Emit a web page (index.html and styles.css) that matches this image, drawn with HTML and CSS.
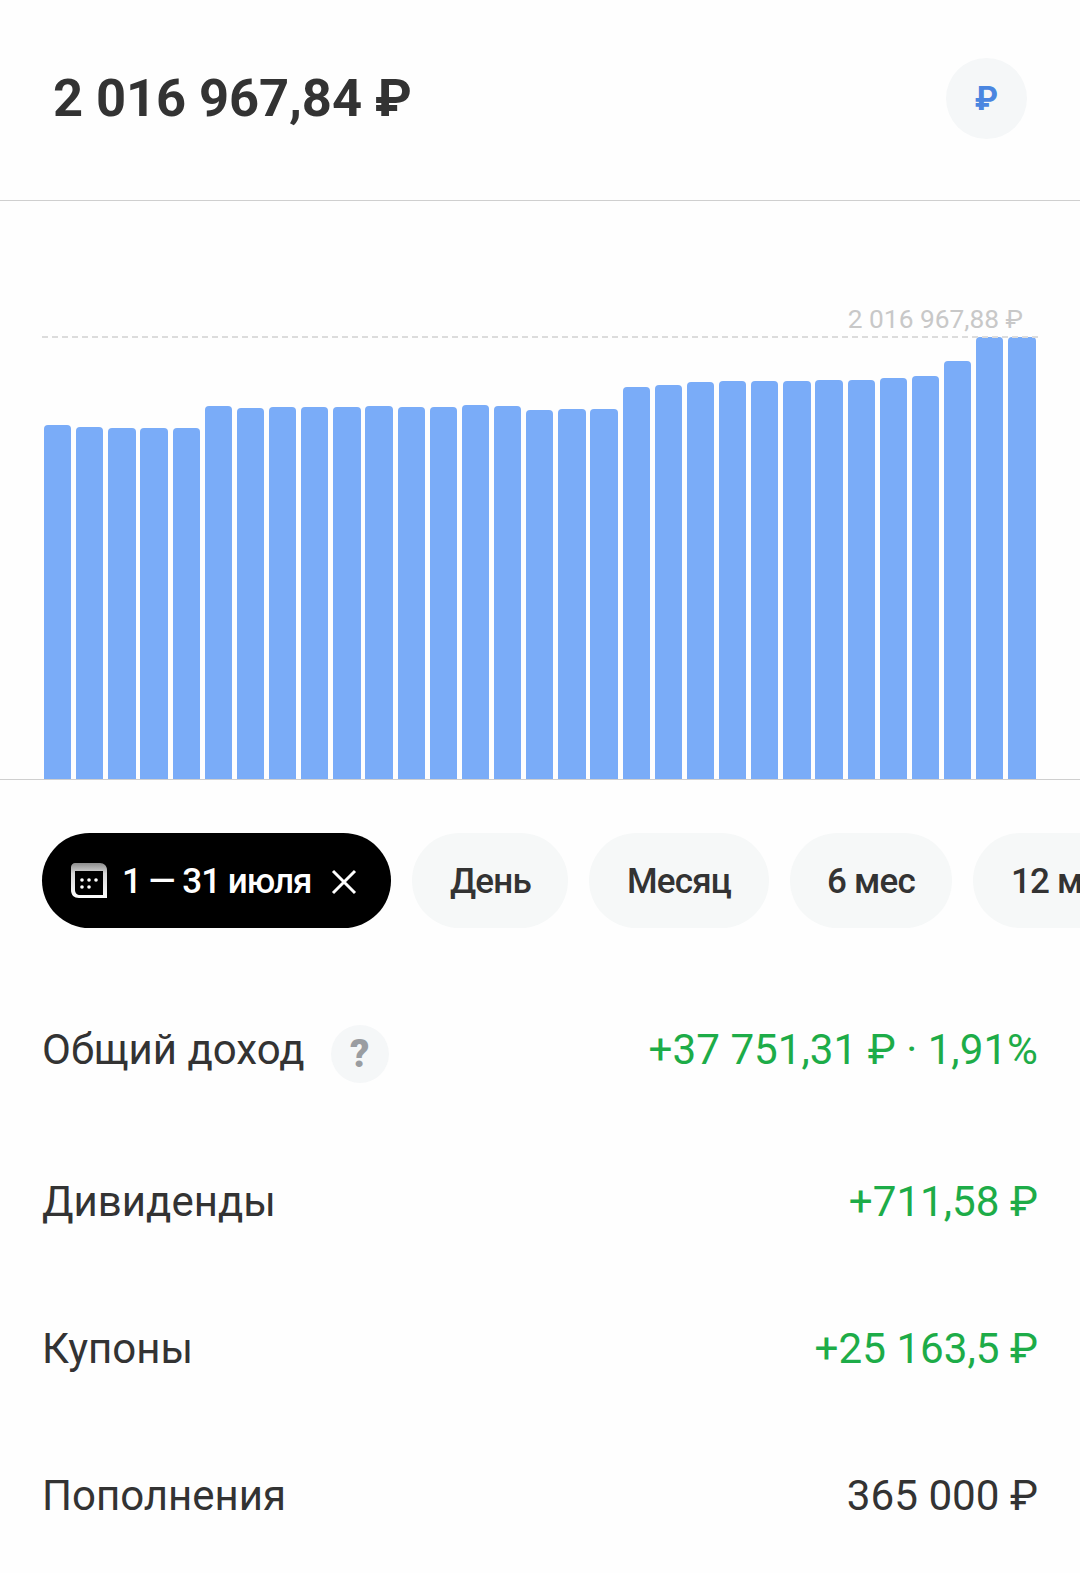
FILE: index.html
```html
<!DOCTYPE html>
<html lang="ru">
  <head>
    <meta charset="UTF-8" />
    <meta name="viewport" content="width=device-width, initial-scale=1.0" />
    <title>Доход</title>
    <link rel="stylesheet" href="styles.css">
  </head>
  <body>
    <header class="top">
      <h1 class="total">2 016 967,84 ₽</h1>
      <div class="currency">₽</div>
    </header>

    <section class="chart">
      <div class="max-label">2 016 967,88 ₽</div>
      <div class="max-line"></div>
      <div class="bars">
        <div class="bar" style="height:354px"></div>
        <div class="bar" style="height:352px"></div>
        <div class="bar" style="height:351px"></div>
        <div class="bar" style="height:351px"></div>
        <div class="bar" style="height:351px"></div>
        <div class="bar" style="height:373px"></div>
        <div class="bar" style="height:371px"></div>
        <div class="bar" style="height:372px"></div>
        <div class="bar" style="height:372px"></div>
        <div class="bar" style="height:372px"></div>
        <div class="bar" style="height:373px"></div>
        <div class="bar" style="height:372px"></div>
        <div class="bar" style="height:372px"></div>
        <div class="bar" style="height:374px"></div>
        <div class="bar" style="height:373px"></div>
        <div class="bar" style="height:369px"></div>
        <div class="bar" style="height:370px"></div>
        <div class="bar" style="height:370px"></div>
        <div class="bar" style="height:392px"></div>
        <div class="bar" style="height:394px"></div>
        <div class="bar" style="height:397px"></div>
        <div class="bar" style="height:398px"></div>
        <div class="bar" style="height:398px"></div>
        <div class="bar" style="height:398px"></div>
        <div class="bar" style="height:399px"></div>
        <div class="bar" style="height:399px"></div>
        <div class="bar" style="height:401px"></div>
        <div class="bar" style="height:403px"></div>
        <div class="bar" style="height:418px"></div>
        <div class="bar" style="height:442px"></div>
        <div class="bar" style="height:442px"></div>
      </div>
    </section>

    <nav class="periods">
      <div class="pill pill-active">
        <svg class="cal" width="36" height="35" viewBox="0 0 36 35">
          <defs>
            <linearGradient id="calFrame" x1="0" y1="0" x2="0" y2="1">
              <stop offset="0" stop-color="#8c8c8c" />
              <stop offset="0.3" stop-color="#d8d8d8" />
              <stop offset="1" stop-color="#fff" />
            </linearGradient>
          </defs>
          <path d="M4 0H29C33 0 36 3 36 7V35H8C3 35 0 32 0 27V4C0 2 2 0 4 0Z" fill="url(#calFrame)" />
          <path d="M4 8H32V32H9C6 32 4 30 4 27Z" fill="#000" />
          <g fill="#fff">
            <circle cx="11" cy="17" r="1.800" />
            <circle cx="18" cy="17" r="1.800" />
            <circle cx="25" cy="17" r="1.800" />
            <circle cx="11" cy="24" r="1.800" />
            <circle cx="18" cy="24" r="1.800" />
          </g>
        </svg>
        <span>1 — 31 июля</span>
        <svg class="close" width="26" height="26" viewBox="0 0 26 26">
          <path d="M2 2L24 24M24 2L2 24" stroke="#fff" stroke-width="3" fill="none" />
        </svg>
      </div>
      <div class="pill">День</div>
      <div class="pill">Месяц</div>
      <div class="pill">6 мес</div>
      <div class="pill">12 мес</div>
    </nav>

    <section class="rows">
      <div class="row row-first">
        <div class="name">Общий доход <span class="hint">?</span></div>
        <div class="val green">+37 751,31 ₽ · 1,91%</div>
      </div>
      <div class="row">
        <div class="name">Дивиденды</div>
        <div class="val green">+711,58 ₽</div>
      </div>
      <div class="row">
        <div class="name">Купоны</div>
        <div class="val green">+25 163,5 ₽</div>
      </div>
      <div class="row">
        <div class="name">Пополнения</div>
        <div class="val">365 000 ₽</div>
      </div>
    </section>
  </body>
</html>
```

FILE: styles.css
```css
* {
  font-family: 'Roboto', 'Liberation Sans', sans-serif;
  margin: 0;
  padding: 0;
  box-sizing: border-box;
}

body {
  width: 1080px;
  height: 1573px;
  overflow: hidden;
  background-color: #fefefe;
  color: #333;
}

.top {
  height: 201px;
  padding: 58px 53px 0 53px;
  display: flex;
  justify-content: space-between;
  align-items: flex-start;
  border-bottom: 1.5px solid #cfcfcf;
}

.total {
  font-size: 52.5px;
  font-weight: 700;
  line-height: 80px;
  letter-spacing: -0.1px;
}

.currency {
  width: 81px;
  height: 81px;
  border-radius: 50%;
  background-color: #f5f7f8;
  color: #4a86e0;
  font-size: 33px;
  font-weight: 700;
  display: flex;
  align-items: center;
  justify-content: center;
}

.chart {
  position: relative;
  height: 579px;
  display: flex;
  align-items: flex-end;
  padding-left: 44px;
  border-bottom: 1.5px solid #cfcfcf;
}

.max-label {
  position: absolute;
  right: 57px;
  top: 102px;
  font-size: 26.300px;
  line-height: 32px;
  color: #c8c8c8;
}

.max-line {
  position: absolute;
  left: 42px;
  right: 42px;
  top: 135px;
  border-top: 2px dashed #dcdcdc;
}

.bars {
  display: flex;
  align-items: flex-end;
  gap: 4.850px;
}

.bar {
  width: 27.300px;
  background-color: #7aacf8;
  border-radius: 4px 4px 0 0;
}

.periods {
  display: flex;
  gap: 21px;
  padding: 53px 0 0 42px;
  overflow: hidden;
}

.pill {
  flex: none;
  height: 95px;
  padding: 2px 37.500px 0;
  border-radius: 48px;
  background-color: #f6f8f8;
  display: flex;
  align-items: center;
  font-size: 35px;
  font-weight: 500;
  letter-spacing: -0.8px;
  color: #333;
}

.pill-active {
  background-color: #000;
  color: #fff;
  padding: 2px 34px 0 29px;
  letter-spacing: -1px;
}

.cal {
  margin-right: 15px;
  margin-top: -2px;
}

.close {
  margin-left: 20px;
}

.rows {
  margin-top: 43px;
}

.row {
  height: 147px;
  display: flex;
  justify-content: space-between;
  align-items: center;
  padding: 0 42px;
  font-size: 42px;
}

.row-first {
  height: 157px;
}

.name {
  display: flex;
  align-items: center;
  gap: 26px;
}

.hint {
  width: 58px;
  height: 58px;
  margin-top: 8px;
  border-radius: 50%;
  background-color: #f5f7f8;
  color: #9a9da1;
  font-size: 38px;
  font-weight: 900;
  display: flex;
  align-items: center;
  justify-content: center;
}

.val {
  font-size: 42.200px;
}

.green {
  color: #1dac48;
}
```
